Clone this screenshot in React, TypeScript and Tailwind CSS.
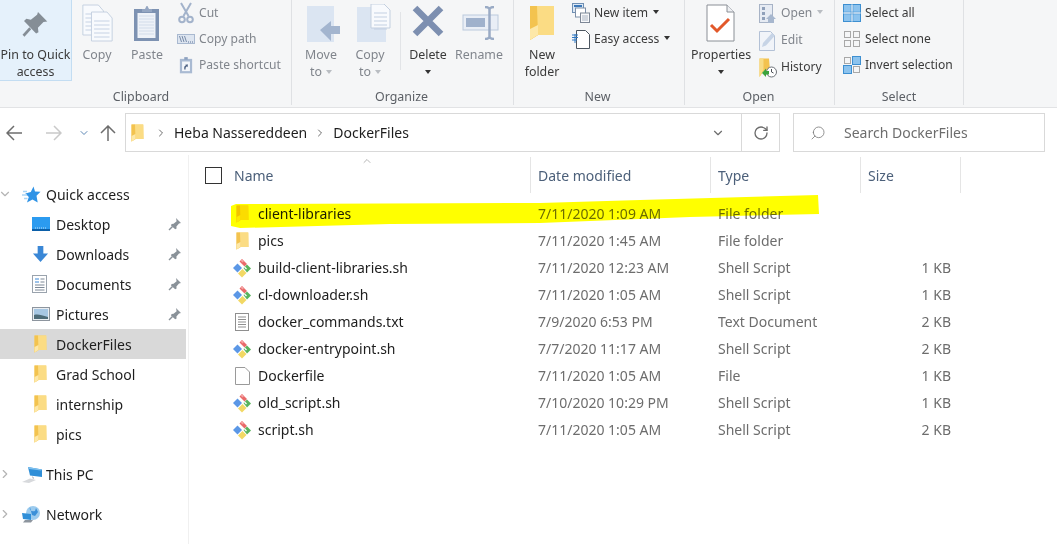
import type { ReactNode } from "react";
import { ChevronDown, ChevronRight, ChevronUp, RotateCw, Search } from "lucide-react";

const Folder = ({ className = "w-[13px] h-[18px]" }: { className?: string }) => (
  <svg viewBox="0 0 13 18" className={className}>
    <path d="M0.500 0.500h11.500l0.500 14.500H4.500L0.500 17.500z" fill="#f7cf6a" />
    <path d="M3.500 0.500h9v14.500h-9z" fill="#fbdc84" />
    <path d="M0.500 0.500h3.500l0.500 14.500-4 2.500z" fill="#f3c34f" />
    <path d="M0.500 12l4-2v5l-4 2.500z" fill="#fde8a8" />
  </svg>
);

const GitFile = () => (
  <svg viewBox="0 0 20 20" className="w-5 h-5">
    <path d="M5.500 5.500l4.500 4.500-4.500 4.500L1 10z" fill="#5b97e6" />
    <path d="M10 1l5 5-2.500 2.500-5-5z" fill="#e96a6a" />
    <path d="M8.500 2.500l1.500-1.500 2 2-1.500 1.500z" fill="#f4a3a3" />
    <path d="M15 6.500l4 4-4 4-3.500-4.500z" fill="#58b35c" />
    <path d="M10.500 11l4 4-4.500 4.500-4-4z" fill="#f2d864" />
    <path d="M12.500 9l2 2" stroke="#ffffff" strokeWidth="1.200" />
  </svg>
);

const PinSmall = () => (
  <svg viewBox="0 0 14 14" className="w-[14px] h-[14px]">
    <path d="M8 1l5 5-2 .6-2.600 3 .2 2-1.400 .6L3 8.400l.6-1.400 2-.2 3-2.600z" fill="#8a9299" />
    <path d="M4.500 9.500L1 13" stroke="#8a9299" strokeWidth="1.500" />
  </svg>
);

const DocLines = ({ x, y, w = 24, h = 30 }: { x: number; y: number; w?: number; h?: number }) => (
  <g>
    <path d={`M${x} ${y}h${w - 6}l6 6v${h - 6}h-${w}z`} fill="#f8fafd" stroke="#c3cfdf" />
    {[9, 13, 17, 21, 25].map((d) => (
      <path key={d} d={`M${x + 3} ${y + d}h${w - 6}`} stroke="#c3d0e2" />
    ))}
  </g>
);

const icons: Record<string, ReactNode> = {
  pin: (
    <svg viewBox="0 0 36 36" className="w-[27px] h-[27px] mt-[2px]">
      <path d="M21 2l13 12-5 1-7 8 1 6-3 2-17-16 3-3 6 1 8-7z" fill="#858e96" transform="translate(-0.500 -1) rotate(3 18 18)" />
      <path d="M11 23L2 33" stroke="#858e96" strokeWidth="3.500" />
    </svg>
  ),
  copy: (
    <svg viewBox="0 0 36 38" className="w-[31px] h-[38px]" preserveAspectRatio="none">
      <DocLines x={1} y={1} />
      <DocLines x={11} y={8} w={24} h={29} />
    </svg>
  ),
  paste: (
    <svg viewBox="0 0 30 38" className="w-[30px] h-[38px]">
      <rect x="2" y="5" width="25" height="32" fill="#7d92b2" />
      <rect x="5.500" y="9" width="18" height="25" fill="#eef2f8" />
      {[12, 15, 18, 21, 24, 27, 30].map((d) => (
        <path key={d} d={`M7 ${d}h15`} stroke="#d2dcea" />
      ))}
      <path d="M10 5h3l1.500-3h1l1.500 3h3v3H10z" fill="#94a6c2" />
    </svg>
  ),
  cut: (
    <svg viewBox="0 0 16 22" className="w-4 h-[22px]" fill="none" stroke="#a3b3cb">
      <path d="M3 1l7.500 13M13 1L5.500 14" strokeWidth="2" />
      <circle cx="4" cy="17.500" r="2.800" strokeWidth="2" />
      <circle cx="12" cy="17.500" r="2.800" strokeWidth="2" />
    </svg>
  ),
  copyPath: (
    <svg viewBox="0 0 18 10" className="w-[18px] h-[10px]">
      <rect x="0.500" y="0.500" width="17" height="9" fill="#dde5f0" stroke="#a9b9d0" />
      <path d="M2.500 2l2 6M5 2l2 6M7.500 2l2 6" stroke="#5d7396" strokeWidth="0.800" />
      <path d="M11 8h1M13 8h1M15 8h1" stroke="#5d7396" />
    </svg>
  ),
  pasteShortcut: (
    <svg viewBox="0 0 16 20" className="w-[14px] h-[18px]">
      <rect x="1" y="3" width="14" height="16.500" fill="#a9bad2" />
      <rect x="3.500" y="6" width="9" height="11" fill="#f3f6fa" />
      <path d="M6 1h4v3H6z" fill="#8ea2c0" />
      <path d="M6 15v-3l2-2H6.500l3.500-1 0 3.500-1-1-1.500 1.500V15z" fill="#4a5f80" />
    </svg>
  ),
  moveTo: (
    <svg viewBox="0 0 34 38" className="w-[34px] h-[38px] ml-[6px]">
      <rect x="0" y="2" width="27" height="36" fill="#dbe5f2" />
      <path d="M13 26l11-9v5h9v8h-9v7z" fill="#a3b5cf" />
    </svg>
  ),
  copyTo: (
    <svg viewBox="0 0 34 38" className="w-[34px] h-[38px] ml-[7px]">
      <rect x="0" y="3" width="29" height="36" fill="#dbe5f2" />
      <DocLines x={14} y={0} w={19} h={24} />
    </svg>
  ),
  del: (
    <svg viewBox="0 0 32 32" className="w-8 h-8 -mt-[4px]">
      <path d="M3 3l26 26M29 3L3 29" stroke="#7d8fb0" strokeWidth="6.500" />
    </svg>
  ),
  rename: (
    <svg viewBox="0 0 38 34" className="w-[38px] h-[34px] ml-[4px]">
      <rect x="1" y="9" width="35" height="15" fill="#e9eef6" stroke="#bccadd" />
      <rect x="4" y="12" width="19" height="9" fill="#9fb1cc" />
      <path d="M23 1c3 0 4 1 4.500 2C28 2 29 1 32 1M27.500 3v28M23 33c3 0 4-1 4.500-2 .5 1 1.500 2 4.500 2" fill="none" stroke="#9aabc5" strokeWidth="2.500" />
    </svg>
  ),
  newItem: (
    <svg viewBox="0 0 18 20" className="w-[18px] h-5">
      <rect x="0.500" y="0.500" width="11" height="9" fill="#dce8f5" stroke="#6f8fb3" />
      <rect x="2" y="2" width="8" height="2" fill="#3d78b8" />
      <rect x="3.500" y="5" width="10" height="9" fill="#ffffff" stroke="#7d8fa8" />
      <rect x="8.500" y="10" width="9" height="9.500" fill="#f7f8fa" stroke="#7d8796" />
      <path d="M10 13h6M10 15h6M10 17h6" stroke="#a9b3c1" />
    </svg>
  ),
  easyAccess: (
    <svg viewBox="0 0 18 20" className="w-[18px] h-5">
      <path d="M4.500 1.500h9l4 4v14h-13z" fill="#ffffff" stroke="#4c5660" />
      <path d="M0 6h6M0 8.500h6M0 11h5" stroke="#2f78c4" />
      <path d="M3 5v9" stroke="#2f78c4" />
    </svg>
  ),
  properties: (
    <svg viewBox="0 0 30 38" className="w-[30px] h-[38px]">
      <path d="M1 1h20l7 7v29H1z" fill="#ffffff" stroke="#8a8f96" />
      <path d="M21 1v7h7" fill="#eef0f3" stroke="#8a8f96" />
      <path d="M5 21l6 6L23 15" fill="none" stroke="#e2582a" strokeWidth="3" />
    </svg>
  ),
  open: (
    <svg viewBox="0 0 18 20" className="w-[18px] h-5">
      <rect x="0.500" y="0.500" width="13" height="18" fill="#e6ebf3" stroke="#a7b3c6" />
      <path d="M3 3h3v3H3zM3 8h3v3H3zM3 13h3v3H3z" fill="#8fa0ba" />
      <path d="M7 15l5-5 5 5h-2v4H9v-4z" fill="#a7b7ce" />
    </svg>
  ),
  edit: (
    <svg viewBox="0 0 18 20" className="w-[18px] h-5">
      <path d="M0.500 0.500h11l4 4v15H0.500z" fill="#f1f4f9" stroke="#b3c1d6" />
      <path d="M3 16l1-4 9-10 3 2.500-9 10z" fill="#c7d4e6" />
    </svg>
  ),
  history: (
    <svg viewBox="0 0 18 20" className="w-[18px] h-5">
      <path d="M0.500 0.500H10l1 12H5L0.500 19z" fill="#f3c24f" />
      <path d="M0.500 0.500h4v11l-4 7.500z" fill="#f8dc85" />
      <circle cx="12.500" cy="14" r="5" fill="#ffffff" stroke="#6c7177" />
      <path d="M12.500 11v3l2 1" fill="none" stroke="#4d5257" />
      <path d="M3 15l4-4.500v2.500h3v3.500H7V19z" fill="#3aa33c" />
    </svg>
  ),
  selectAll: (
    <svg viewBox="0 0 18 18" className="w-[18px] h-[18px]">
      <rect x="0.500" y="0.500" width="17" height="17" fill="#8cc3ee" stroke="#3d8fd1" />
      <path d="M9 0.500v17M0.500 9h17" stroke="#f5f6f7" strokeWidth="1.500" />
      <path d="M8 .5v17M10 .5v17M.5 8h17M.5 10h17" stroke="#3d8fd1" strokeWidth="0.500" />
    </svg>
  ),
  selectNone: (
    <svg viewBox="0 0 18 18" className="w-[18px] h-[18px]" fill="none" stroke="#a8a8a8">
      <rect x="1.500" y="1.500" width="6" height="6" />
      <rect x="10.500" y="1.500" width="6" height="6" />
      <rect x="1.500" y="10.500" width="6" height="6" />
      <rect x="10.500" y="10.500" width="6" height="6" />
    </svg>
  ),
  invert: (
    <svg viewBox="0 0 18 18" className="w-[18px] h-[18px]">
      <rect x="1.500" y="1.500" width="6" height="6" fill="none" stroke="#a8a8a8" />
      <rect x="9.500" y="0.500" width="8" height="8" fill="#8cc3ee" stroke="#3d8fd1" />
      <rect x="0.500" y="9.500" width="8" height="8" fill="#8cc3ee" stroke="#3d8fd1" />
      <rect x="10.500" y="10.500" width="6" height="6" fill="none" stroke="#a8a8a8" />
    </svg>
  ),
};

const Caret = ({ light }: { light?: boolean }) => (
  <span className={`inline-block w-0 h-0 border-x-[3.5px] border-x-transparent border-t-[4px] ${light ? "border-t-[#b9bdc2]" : "border-t-[#333333]"}`} />
);

type BigButtonProps = {
  icon: ReactNode;
  lines: ReactNode[];
  width: string;
  disabled?: boolean;
  active?: boolean;
};

const BigButton = ({ icon, lines, width, disabled, active }: BigButtonProps) => (
  <div
    className={`${width} h-[81px] flex flex-col items-center shrink-0 leading-[17px] ${disabled ? "text-[#80858c]" : "text-[#3a3a3a]"} ${active ? "bg-[#e5f1fb] border-r border-b border-[#c3ddf2]" : ""}`}
  >
    <div className="h-[46px] flex items-center justify-center">{icon}</div>
    {lines.map((line, i) => (
      <div key={i} className="whitespace-nowrap h-[17px] flex items-center gap-1">
        {line}
      </div>
    ))}
  </div>
);

type SmallRow = { icon: string; label: string; caret?: "dark" | "light"; disabled?: boolean };

type SmallColumnProps = {
  rows: SmallRow[];
  width: string;
  rowH?: string;
  pl?: string;
};

const SmallColumn = ({ rows, width, rowH = "h-[26px]", pl = "pl-0" }: SmallColumnProps) => (
  <div className={`${width} ${pl} flex flex-col shrink-0 text-[12.1px]`}>
    {rows.map((row) => (
      <div key={row.label} className={`${rowH} flex items-center whitespace-nowrap ${row.disabled ? "text-[#80858c]" : "text-[#3a3a3a]"}`}>
        <div className="w-[22px] flex justify-center shrink-0 mr-[2px]">{icons[row.icon]}</div>
        <span>{row.label}</span>
        {row.caret && (
          <span className="ml-[5px] mb-[3px] flex">
            <Caret light={row.caret === "light"} />
          </span>
        )}
      </div>
    ))}
  </div>
);

const Group = ({ label, width, labelPad = "", children }: { label: string; width: string; labelPad?: string; children: ReactNode }) => (
  <div className={`${width} shrink-0 flex flex-col border-r border-[#dfe1e4] mb-[2px]`}>
    <div className="flex h-[88px] items-start">{children}</div>
    <div className={`text-center text-[#5c6066] leading-[17px] ${labelPad}`}>{label}</div>
  </div>
);

const Ribbon = () => (
  <div className="h-[108px] bg-[#f5f6f7] border-b border-[#e2e3e5] flex overflow-hidden text-[12.4px]">
    <Group label="Clipboard" width="w-[292px]" labelPad="pr-[9px]">
      <BigButton icon={icons.pin} lines={["Pin to Quick", "access"]} width="w-[72px]" active />
      <BigButton icon={icons.copy} lines={["Copy"]} width="w-[50px]" disabled />
      <BigButton icon={icons.paste} lines={["Paste"]} width="w-[50px]" disabled />
      <SmallColumn
        width="w-[118px]"
        pl="pl-[3px]"
        rows={[
          { icon: "cut", label: "Cut", disabled: true },
          { icon: "copyPath", label: "Copy path", disabled: true },
          { icon: "pasteShortcut", label: "Paste shortcut", disabled: true },
        ]}
      />
    </Group>
    <Group label="Organize" width="w-[222px]" labelPad="pr-[2px]">
      <BigButton icon={icons.moveTo} lines={["Move", <>to <Caret light /></>]} width="w-[58px]" disabled />
      <BigButton icon={icons.copyTo} lines={["Copy", <>to <Caret light /></>]} width="w-[40px]" disabled />
      <div className="w-px h-[58px] mt-[12px] ml-[10px] bg-[#e2e4e7] shrink-0" />
      <BigButton icon={icons.del} lines={["Delete", <Caret />]} width="w-[54px]" />
      <BigButton icon={icons.rename} lines={["Rename"]} width="w-[48px]" disabled />
    </Group>
    <Group label="New" width="w-[171px]" labelPad="pr-[3px]">
      <BigButton icon={<Folder className="w-[26px] h-[36px]" />} lines={["New", "folder"]} width="w-[56px]" />
      <SmallColumn
        width="w-[112px]"
        rows={[
          { icon: "newItem", label: "New item", caret: "dark" },
          { icon: "easyAccess", label: "Easy access", caret: "dark" },
        ]}
      />
    </Group>
    <Group label="Open" width="w-[150px]" labelPad="pr-[2px]">
      <BigButton icon={icons.properties} lines={["Properties", <Caret />]} width="w-[72px]" />
      <SmallColumn
        width="w-[76px]"
        rowH="h-[27px]"
        rows={[
          { icon: "open", label: "Open", caret: "light", disabled: true },
          { icon: "edit", label: "Edit", disabled: true },
          { icon: "history", label: "History" },
        ]}
      />
    </Group>
    <Group label="Select" width="w-[129px]">
      <SmallColumn
        width="w-[128px]"
        pl="pl-[6px]"
        rows={[
          { icon: "selectAll", label: "Select all" },
          { icon: "selectNone", label: "Select none" },
          { icon: "invert", label: "Invert selection" },
        ]}
      />
    </Group>
  </div>
);

const NavArrow = ({ d, className }: { d: string; className: string }) => (
  <svg viewBox="0 0 16 16" className={`w-4 h-4 shrink-0 ${className}`} fill="none" stroke="currentColor" strokeWidth="1.500">
    <path d={d} />
  </svg>
);

const AddressBar = () => (
  <div className="h-[47px] flex items-center pt-[2px]">
    <div className="w-[125px] flex items-center text-[#6d6d6d] shrink-0">
      <NavArrow d="M1 8h15M8 1L1 8l7 7" className="ml-[6px]" />
      <NavArrow d="M0 8h15M8 1l7 7-7 7" className="ml-[24px] text-[#c9c9c9]" />
      <ChevronDown className="w-3 h-3 ml-[16px] text-[#5d87b5]" strokeWidth={2} />
      <NavArrow d="M8 16V1M1 8l7-7 7 7" className="ml-[10px]" />
    </div>
    <div className="w-[655px] h-[39px] border border-[#d9d9d9] flex items-center shrink-0 text-[#1e1e1e]">
      <span className="ml-[5px]"><Folder /></span>
      <ChevronRight className="w-3 h-3 ml-[11px] text-[#6d6d6d]" />
      <span className="ml-[7px]">Heba Nassereddeen</span>
      <ChevronRight className="w-3 h-3 ml-[7px] text-[#6d6d6d]" />
      <span className="ml-[7px]">DockerFiles</span>
      <ChevronDown className="w-[14px] h-[14px] ml-auto mr-[16px] text-[#6d6d6d]" />
      <div className="w-[38px] h-full border-l border-[#d9d9d9] flex items-center justify-center">
        <RotateCw className="w-[16px] h-[16px] text-[#6d6d6d]" />
      </div>
    </div>
    <div className="w-[252px] h-[39px] ml-[13px] border border-[#d9d9d9] flex items-center shrink-0 text-[#6d6d6d]">
      <Search className="w-[16px] h-[16px] ml-[16px] -scale-x-100 text-[#7d7d7d]" strokeWidth={1.250} />
      <span className="ml-[18px]">Search DockerFiles</span>
    </div>
  </div>
);

const navIcons: Record<string, ReactNode> = {
  star: (
    <svg viewBox="0 0 19 17" className="w-[19px] h-[17px]">
      <path d="M11.500 0.500l1.500 5 5.500.3-4 4 1.200 6.700-5.200-3-5.500 3 1.800-5.500-3.500-3.500 5.500-1.500z" fill="#2f93e6" />
      <path d="M1 5.500h4M0 9h5M2 12.500h3.500" stroke="#a9d4f5" strokeWidth="1.500" />
    </svg>
  ),
  desktop: (
    <svg viewBox="0 0 18 14" className="w-[18px] h-[14px]">
      <rect width="18" height="13" fill="#2b9bf0" />
      <rect y="12" width="18" height="2" fill="#0b5fa8" />
      <path d="M3 11h12" stroke="#bfe0f7" strokeDasharray="1 1" />
    </svg>
  ),
  downloads: (
    <svg viewBox="0 0 18 18" className="w-[17px] h-[17px]">
      <path d="M6 0h6v8h5l-8 9-8-9h5z" fill="#3a87d6" />
    </svg>
  ),
  documents: (
    <svg viewBox="0 0 15 18" className="w-[15px] h-[18px]">
      <rect x="0.500" y="0.500" width="14" height="17" fill="#ffffff" stroke="#9aa3ad" />
      <path d="M3 4h4M3 7h4" stroke="#3a87d6" />
      <path d="M8.500 4h4M8.500 7h4M3 10h9.500M3 12.500h9.500M3 15h9.500" stroke="#7d8896" />
    </svg>
  ),
  pictures: (
    <svg viewBox="0 0 18 14" className="w-[18px] h-[14px]">
      <rect x="0.500" y="0.500" width="17" height="13" fill="#e9edf1" stroke="#8d959e" />
      <rect x="2" y="2" width="14" height="10" fill="#a7c7e3" />
      <path d="M2 8c4-1 7 0 14 2v2H2z" fill="#4d6b78" />
    </svg>
  ),
  pc: (
    <svg viewBox="0 0 20 17" className="w-5 h-[17px]">
      <path d="M6 1l14 2.500v7.500L8 9.500z" fill="#2f8fd8" />
      <path d="M6 1l14 2.500-1 1L7 3z" fill="#7ec0ee" />
      <path d="M10 10l2 2-1 1z" fill="#9aa3ad" />
      <path d="M0 16l8-3.500 6 1.500-7 3z" fill="#d7d9dc" />
    </svg>
  ),
  network: (
    <svg viewBox="0 0 18 17" className="w-[18px] h-[17px]">
      <circle cx="11" cy="7" r="7" fill="#9ccbee" />
      <path d="M8 1c-1 3 1 5 5 4l1-3 2 4-3 4-3-1z" fill="#3a8fd8" />
      <path d="M0 7l9 1v6l-8-1z" fill="#2f8fd8" />
      <path d="M3 14h8l-2 2.500H1z" fill="#8d959e" />
    </svg>
  ),
};

type NavRowProps = {
  label: string;
  icon: ReactNode;
  pinned?: boolean;
  selected?: boolean;
  top?: boolean;
  expand?: "open" | "closed";
};

const NavRow = ({ label, icon, pinned, selected, top, expand }: NavRowProps) => (
  <div className={`h-[30px] w-[186px] flex items-center text-[#1e1e1e] ${selected ? "bg-[#d9d9d9]" : ""}`}>
    {top ? (
      <>
        <span className="w-[22px] flex justify-start -ml-[2px] mr-[2px] text-[#b4b4b4]">
          {expand === "open" ? <ChevronDown className="w-[14px] h-[14px]" /> : <ChevronRight className="w-[14px] h-[14px]" />}
        </span>
        <span className="w-[24px] flex justify-start">{icon}</span>
        <span>{label}</span>
      </>
    ) : (
      <>
        <span className="w-[32px]" />
        <span className="w-[24px] flex justify-start">{icon}</span>
        <span>{label}</span>
      </>
    )}
    {pinned && (
      <span className="ml-auto mr-[4px]">
        <PinSmall />
      </span>
    )}
  </div>
);

const Sidebar = () => (
  <div className="w-[189px] h-full shrink-0 border-r border-[#f0f0f0] pt-[24px]">
    <NavRow top expand="open" label="Quick access" icon={navIcons.star} />
    <NavRow label="Desktop" icon={navIcons.desktop} pinned />
    <NavRow label="Downloads" icon={navIcons.downloads} pinned />
    <NavRow label="Documents" icon={navIcons.documents} pinned />
    <NavRow label="Pictures" icon={navIcons.pictures} pinned />
    <NavRow label="DockerFiles" icon={<span className="ml-[2px]"><Folder /></span>} selected />
    <NavRow label="Grad School" icon={<span className="ml-[2px]"><Folder /></span>} />
    <NavRow label="internship" icon={<span className="ml-[2px]"><Folder /></span>} />
    <NavRow label="pics" icon={<span className="ml-[2px]"><Folder /></span>} />
    <div className="h-[10px]" />
    <NavRow top expand="closed" label="This PC" icon={navIcons.pc} />
    <div className="h-[10px]" />
    <NavRow top expand="closed" label="Network" icon={navIcons.network} />
  </div>
);

const TextFile = () => (
  <svg viewBox="0 0 15 18" className="w-[15px] h-[18px]">
    <rect x="0.500" y="0.500" width="13" height="17" fill="#ffffff" stroke="#8f8f8f" />
    <path d="M3 4h8M3 6.500h8M3 9h8M3 11.500h8M3 14h8" stroke="#8f8f8f" />
  </svg>
);

const BlankFile = () => (
  <svg viewBox="0 0 15 18" className="w-[15px] h-[18px]">
    <path d="M0.500 0.500h9.500l4.500 4.500v12.500h-14z" fill="#ffffff" stroke="#9a9a9a" />
  </svg>
);

const files = [
  { name: "client-libraries", date: "7/11/2020 1:09 AM", type: "File folder", size: "", icon: <Folder /> },
  { name: "pics", date: "7/11/2020 1:45 AM", type: "File folder", size: "", icon: <Folder /> },
  { name: "build-client-libraries.sh", date: "7/11/2020 12:23 AM", type: "Shell Script", size: "1 KB", icon: <GitFile /> },
  { name: "cl-downloader.sh", date: "7/11/2020 1:05 AM", type: "Shell Script", size: "1 KB", icon: <GitFile /> },
  { name: "docker_commands.txt", date: "7/9/2020 6:53 PM", type: "Text Document", size: "2 KB", icon: <TextFile /> },
  { name: "docker-entrypoint.sh", date: "7/7/2020 11:17 AM", type: "Shell Script", size: "2 KB", icon: <GitFile /> },
  { name: "Dockerfile", date: "7/11/2020 1:05 AM", type: "File", size: "1 KB", icon: <BlankFile /> },
  { name: "old_script.sh", date: "7/10/2020 10:29 PM", type: "Shell Script", size: "1 KB", icon: <GitFile /> },
  { name: "script.sh", date: "7/11/2020 1:05 AM", type: "Shell Script", size: "2 KB", icon: <GitFile /> },
];

const FileList = () => (
  <div className="relative flex-1 h-full">
    <div className="h-[36px] mt-[2px] flex text-[#4c607a]">
      <div className="w-[342px] relative flex items-center border-r border-[#e5e5e5]">
        <div className="w-[17px] h-[17px] ml-[16px] border border-[#333333]" />
        <span className="ml-[12px]">Name</span>
        <ChevronUp className="absolute left-[172px] -top-[2px] w-3 h-3 text-[#8a8a8a]" strokeWidth={1.250} />
      </div>
      <div className="w-[180px] pl-[7px] flex items-center border-r border-[#e5e5e5]">Date modified</div>
      <div className="w-[150px] pl-[7px] flex items-center border-r border-[#e5e5e5]">Type</div>
      <div className="w-[100px] pl-[7px] flex items-center border-r border-[#e5e5e5]">Size</div>
    </div>
    <div className="pt-[7px]">
      {files.map((file) => (
        <div key={file.name} className="h-[27px] flex items-center">
          <div className="w-[341px] flex items-center text-[#1e1e1e]">
            <span className="w-[20px] ml-[43px] flex justify-center">{file.icon}</span>
            <span className="ml-[6px]">{file.name}</span>
          </div>
          <div className="w-[181px] pl-[8px] text-[#6d6d6d]">{file.date}</div>
          <div className="w-[150px] pl-[7px] text-[#6d6d6d]">{file.type}</div>
          <div className="w-[90px] text-right text-[#6d6d6d]">{file.size}</div>
        </div>
      ))}
    </div>
    {/* marker scribble over the first row */}
    <svg viewBox="0 0 600 40" className="absolute left-[40px] top-[40px] w-[600px] h-[40px] mix-blend-multiply pointer-events-none">
      <path d="M2 11L7 9L311 8L411 5L589 0L590 19L461 22L311 28L161 29L11 33L2 31z" fill="#ffff00" />
    </svg>
  </div>
);

export default function App() {
  return (
    <div className="w-[1057px] h-[544px] overflow-hidden bg-white text-[14px] font-['Noto_Sans',sans-serif] flex flex-col">
      <Ribbon />
      <AddressBar />
      <div className="flex flex-1 min-h-0">
        <Sidebar />
        <FileList />
      </div>
    </div>
  );
}
